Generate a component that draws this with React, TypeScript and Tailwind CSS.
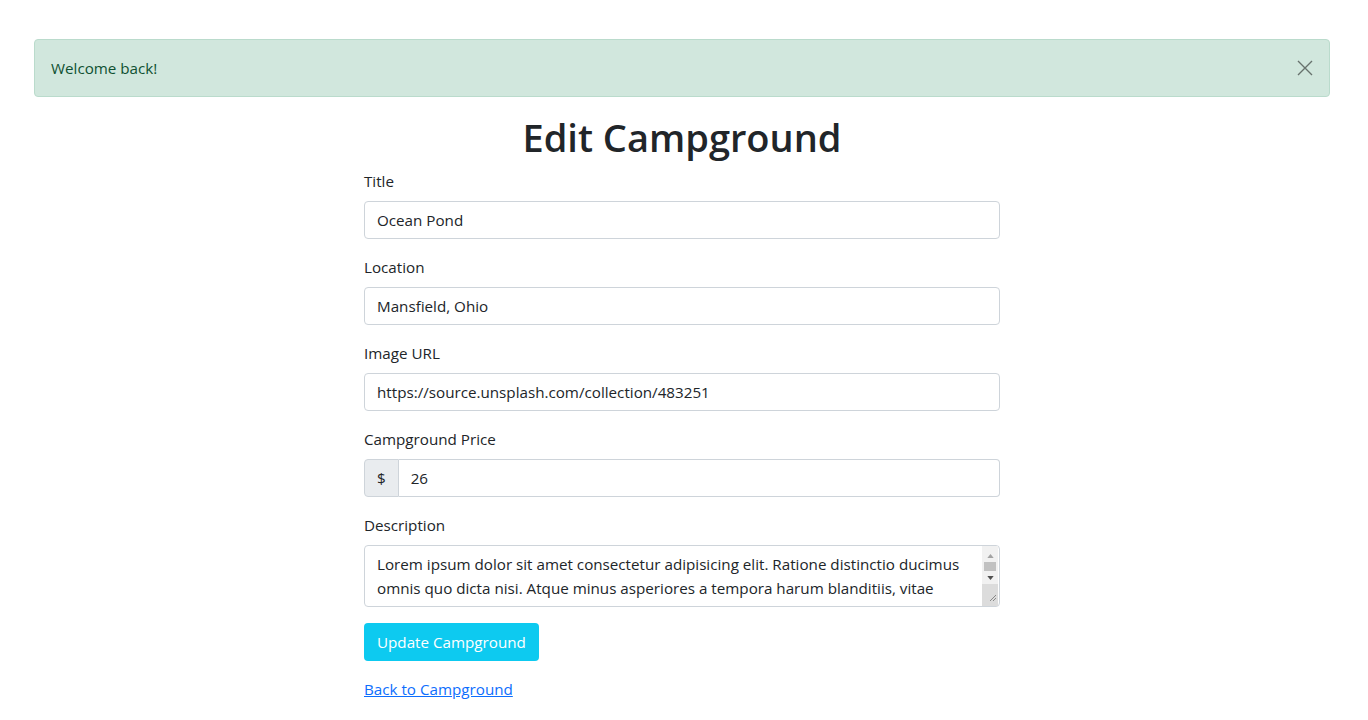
import { useState } from "react";

const desc =
  "Lorem ipsum dolor sit amet consectetur adipisicing elit. Ratione distinctio ducimus omnis quo dicta nisi. Atque minus asperiores a tempora harum blanditiis, vitae nesciunt quas! Facere, numquam voluptatibus. Magnam, porro?";

function Field({ label, value }: { label: string; value: string }) {
  return (
    <div className="mb-4">
      <label className="block mb-2 leading-6">{label}</label>
      <input
        defaultValue={value}
        className="block w-full h-[38px] px-3 border border-[#ced4da] rounded-[4px] text-[#212529] outline-none"
      />
    </div>
  );
}

function App() {
  const [showAlert, setShowAlert] = useState(true);

  return (
    <div className="min-h-screen bg-white text-[#212529] text-[15.2px] pt-[39px] pr-[4px] font-['Segoe_UI','Open_Sans',sans-serif]">
      {showAlert && (
        <div className="mx-[34px] mb-4 flex items-center justify-between rounded-[4px] border border-[#badbcc] bg-[#d1e7dd] text-[#0f5132] pl-4 py-4 leading-6">
          <span>Welcome back!</span>
          <button
            onClick={() => setShowAlert(false)}
            className="px-4 opacity-50 text-black"
            aria-label="Close"
          >
            <svg viewBox="0 0 16 16" className="w-4 h-4" fill="none" stroke="currentColor" strokeWidth="1.4">
              <path d="M1 1l14 14M15 1L1 15" />
            </svg>
          </button>
        </div>
      )}

      <h1 className="text-center text-[38px] leading-[48px] font-semibold mb-2">Edit Campground</h1>

      <form className="mx-auto w-[636px]" onSubmit={(e) => e.preventDefault()}>
        <Field label="Title" value="Ocean Pond" />
        <Field label="Location" value="Mansfield, Ohio" />
        <Field label="Image URL" value="https://source.unsplash.com/collection/483251" />

        <div className="mb-4">
          <label className="block mb-2 leading-6">Campground Price</label>
          <div className="flex h-[38px]">
            <span className="flex items-center px-3 bg-[#e9ecef] border border-[#ced4da] rounded-l-[4px]">$</span>
            <input
              defaultValue="26"
              className="flex-1 px-3 border border-l-0 border-[#ced4da] rounded-r-[4px] outline-none"
            />
          </div>
        </div>

        <div className="mb-4">
          <label className="block mb-2 leading-6">Description</label>
          <div className="relative">
            <textarea
              rows={2}
              defaultValue={desc}
              className="block w-full h-[62px] pl-3 pr-[29px] py-[6px] leading-6 border border-[#ced4da] rounded-[4px] outline-none resize-none overflow-hidden"
            />
            {/* fake classic scrollbar + resize grip */}
            <div className="absolute right-[2px] top-[1px] bottom-[1px] w-[16px] flex flex-col bg-[#f1f1f1]">
              <div className="h-[12px] flex items-end justify-center">
                <svg viewBox="0 0 8 5" className="w-[7px] h-[4px]"><path d="M4 0L8 5H0z" fill="#a3a3a3" /></svg>
              </div>
              <div className="mx-[2px] mt-[4px] h-[9px] bg-[#c1c1c1]" />
              <div className="h-[13px] flex items-center justify-center">
                <svg viewBox="0 0 8 5" className="w-[7px] h-[4px]"><path d="M0 0H8L4 5z" fill="#505050" /></svg>
              </div>
              <div className="flex-1 bg-[#dcdcdc] relative">
                <svg viewBox="0 0 16 16" className="absolute inset-0 w-full h-full">
                  <path d="M14 8L8 14M14 11L11 14" stroke="#888" strokeWidth="1" />
                </svg>
              </div>
            </div>
          </div>
        </div>

        <button className="h-[38px] px-[13px] rounded-[4px] bg-[#0dcaf0] text-white leading-6">Update Campground</button>

        <div className="mt-4">
          <a href="#" className="text-[#0d6efd] underline leading-6">Back to Campground</a>
        </div>
      </form>
    </div>
  );
}

export default App;
